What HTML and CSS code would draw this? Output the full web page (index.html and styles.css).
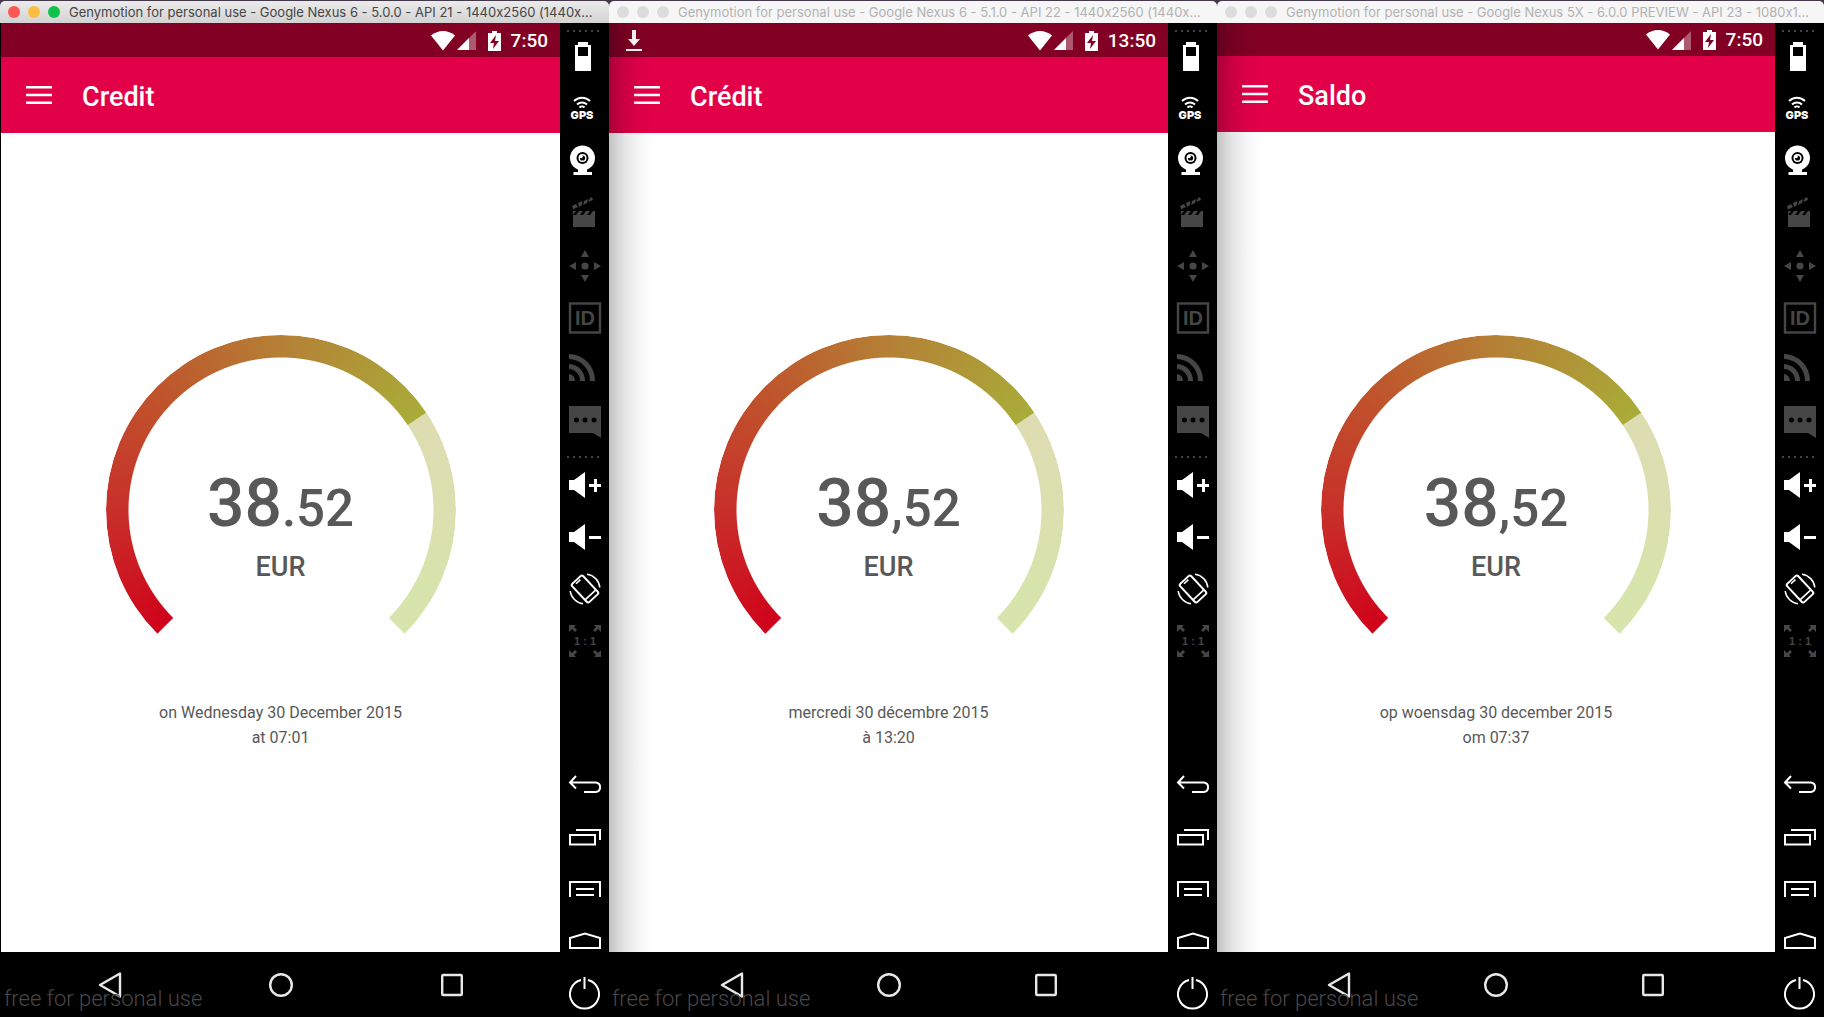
FILE: index.html
```html
<!DOCTYPE html>
<html lang="en">
<head>
<meta charset="utf-8">
<meta name="viewport" content="width=device-width, initial-scale=1">
<title>Genymotion for personal use</title>
<link rel="stylesheet" href="styles.css">
</head>
<body>
<svg class="sprite" aria-hidden="true">
  <symbol id="t-battery" viewBox="0 0 49 52"><path fill="currentColor" fill-rule="evenodd" d="M18 9h10v3h3v26H15V12h3zM18 14v9h10v-9z"/></symbol>
  <symbol id="t-gps" viewBox="0 0 49 52"><g fill="none" stroke="currentColor" stroke-width="2"><path d="M14 16a11.500 11.500 0 0 1 16 0M17 19.500a7.500 7.500 0 0 1 10 0M19.500 22.500a3.600 3.600 0 0 1 5 0"/></g></symbol>
  <symbol id="t-cam" viewBox="0 0 49 52"><circle cx="22.500" cy="21" r="12.500" fill="currentColor"/><path fill="currentColor" d="M18 31h9v4h5v3H13.500v-3H18z"/><circle cx="22.500" cy="21" r="6" fill="#000"/><circle cx="22.500" cy="21" r="4" fill="currentColor"/><circle cx="22.500" cy="21" r="2.600" fill="#000"/><circle cx="21" cy="19.500" r="1.800" fill="currentColor"/></symbol>
  <symbol id="t-clap" viewBox="0 0 49 52"><path fill="currentColor" d="M13 26h22v12H13zM13 22h3l-3 4zM19 22h4l-3 4h-4zM26 22h4l-3 4h-4zM33 22h2v4h-5zM12 17l4-2 2 3-5 2.500zM18 14l4-2 0 4-3 2zM24 12l4-2-1 4-4 2zM30 9l2-1 1 3-5 2z"/></symbol>
  <symbol id="t-move" viewBox="0 0 49 52"><path fill="currentColor" d="M25 9l4 7h-8zM25 41l4-7h-8zM9 25l7-4v8zM41 25l-7-4v8z"/><circle cx="25" cy="25" r="3.600" fill="currentColor"/></symbol>
  <symbol id="t-id" viewBox="0 0 49 52"><rect x="10" y="10.500" width="30" height="29" fill="none" stroke="currentColor" stroke-width="2.400"/></symbol>
  <symbol id="t-rss" viewBox="0 0 49 52"><path fill="currentColor" d="M9 9a26.500 26.500 0 0 1 26 27h-5A21.500 21.500 0 0 0 9 14zM9 19a16.500 16.500 0 0 1 16 17h-5A11.500 11.500 0 0 0 9 24zM9 29a7 7 0 0 1 6 7H9z"/></symbol>
  <symbol id="t-chat" viewBox="0 0 49 52"><path fill="currentColor" d="M9 9h32v32l-8-5H9z"/><g fill="#000"><circle cx="16.500" cy="23" r="2.500"/><circle cx="25" cy="23" r="2.500"/><circle cx="34" cy="23" r="2.500"/></g></symbol>
  <symbol id="t-volup" viewBox="0 0 49 52"><path fill="currentColor" d="M9 21h5l11-8v26l-11-8H9zM29 25h5v-5h3v5h4v3h-4v5h-3v-5h-5z"/></symbol>
  <symbol id="t-voldown" viewBox="0 0 49 52"><path fill="currentColor" d="M9 21h5l11-8v26l-11-8H9zM29 25h12v3H29z"/></symbol>
  <symbol id="t-rotate" viewBox="0 0 49 52"><g fill="none" stroke="currentColor"><g transform="rotate(-43 25 26)"><rect x="17.500" y="13.500" width="15" height="25" rx="2" stroke-width="2"/><path stroke-width="1.600" d="M18 34h14M22 16h6"/></g><path stroke-width="1.500" d="M27 11.200a14.800 14.800 0 0 1 12.800 13.300M10.200 28a14.800 14.800 0 0 0 12.800 12.800"/></g></symbol>
  <symbol id="t-full" viewBox="0 0 49 52"><path fill="currentColor" d="M9 10h7l-2 2 3 3-2 2-3-3-3 3zM41 10h-7l2 2-3 3 2 2 3-3 3 3zM9 42h7l-2-2 3-3-2-2-3 3-3-3zM41 42h-7l2-2-3-3 2-2 3 3 3-3z"/></symbol>
  <symbol id="t-back" viewBox="0 0 49 52"><path fill="none" stroke="currentColor" stroke-width="2" d="M16 19l-6 6.500 6 6M10 25.500h26a4.800 4.800 0 0 1 0 9.500H24"/></symbol>
  <symbol id="t-recent" viewBox="0 0 49 52"><path fill="none" stroke="currentColor" stroke-width="2" d="M10 26h25v9.500H10zM16 21h24v10"/></symbol>
  <symbol id="t-menu" viewBox="0 0 49 52"><path fill="none" stroke="currentColor" stroke-width="2" d="M10 36V21h30v15M16 28h18M16 34h18"/></symbol>
  <symbol id="t-home" viewBox="0 0 49 52"><path fill="none" stroke="currentColor" stroke-width="2" d="M10 35V25l15-4.500L40 25v10z"/></symbol>
  <symbol id="t-power" viewBox="0 0 49 52"><path fill="none" stroke="currentColor" stroke-width="2" d="M21 15a14.500 14.500 0 1 0 7 0M24.500 12v12"/></symbol>

  <symbol id="s-wifi" viewBox="0 0 24 20"><path fill="#fff" d="M0 4.500C7-1.500 17-1.500 24 4.500L12 19.500z"/></symbol>
  <symbol id="s-signal" viewBox="0 0 19 19"><path fill="#fff" fill-opacity=".35" d="M19 0v19H0z"/><path fill="#fff" d="M12 7v12H0z"/></symbol>
  <symbol id="s-charge" viewBox="0 0 13 20"><path fill="#fff" fill-rule="evenodd" d="M4 0h5v2h4v18H0V2h4zM8 4l-6 8h4l-1 6 6-8H7z"/></symbol>
  <symbol id="s-download" viewBox="0 0 16 22"><path fill="#fff" d="M6 0h4v9h4l-6 7-6-7h4zM0 19h16v2H0z"/></symbol>
  <symbol id="a-menu" viewBox="0 0 26 18"><path fill="#fff" d="M0 0h26v2.500H0zM0 7.750h26v2.500H0zM0 15.500h26V18H0z"/></symbol>
  <symbol id="n-back" viewBox="0 0 24 26"><path fill="none" stroke="#e8e8e8" stroke-width="2.400" stroke-linejoin="round" d="M22 1.500v23L2 13z"/></symbol>
  <symbol id="n-home" viewBox="0 0 24 26"><circle cx="12" cy="13" r="10.800" fill="none" stroke="#e8e8e8" stroke-width="2.400"/></symbol>
  <symbol id="n-recent" viewBox="0 0 24 26"><rect x="2.200" y="3" width="19.600" height="20" rx="1" fill="none" stroke="#e8e8e8" stroke-width="2.400"/></symbol>
</svg>

<main class="desktop">
  <section class="window window-active" lang="en">
    <header class="titlebar">
      <button class="light light-red" aria-label="Close"></button><button class="light light-yellow" aria-label="Minimise"></button><button class="light light-green" aria-label="Zoom"></button>
      <span class="titlebar-text">Genymotion for personal use - Google Nexus 6 - 5.0.0 - API 21 - 1440x2560 (1440x...</span>
    </header>
    <div class="device">
      <div class="screen">
        <div class="statusbar">
          <svg class="wifi"><use href="#s-wifi"/></svg><svg class="signal"><use href="#s-signal"/></svg><svg class="charge"><use href="#s-charge"/></svg>
          <time class="clock">7:50</time>
        </div>
        <header class="appbar">
          <button class="hamburger" aria-label="Menu"><svg><use href="#a-menu"/></svg></button>
          <h1 class="appbar-title">Credit</h1>
        </header>
        <div class="content">
          <div class="gauge">
            <div class="amount">38<span class="cents">.52</span></div>
            <div class="currency">EUR</div>
          </div>
          <p class="date">on Wednesday 30 December 2015<br>at 07:01</p>
        </div>
        <nav class="navbar navbar-wide">
          <button aria-label="Back"><svg><use href="#n-back"/></svg></button>
          <button aria-label="Home"><svg><use href="#n-home"/></svg></button>
          <button aria-label="Recent"><svg><use href="#n-recent"/></svg></button>
          <span class="watermark">free for personal use</span>
        </nav>
      </div>
      <aside class="tools">
        <div class="dots"></div>
        <button aria-label="Battery"><svg><use href="#t-battery"/></svg></button>
        <button aria-label="GPS"><svg><use href="#t-gps"/><text class="gps" x="22" y="34" text-anchor="middle">GPS</text></svg></button>
        <button aria-label="Camera"><svg><use href="#t-cam"/></svg></button>
        <button disabled aria-label="Screencast"><svg><use href="#t-clap"/></svg></button>
        <button disabled aria-label="Remote control"><svg><use href="#t-move"/></svg></button>
        <button disabled aria-label="Identifiers"><svg><use href="#t-id"/><text class="idt" x="25" y="32" text-anchor="middle">ID</text></svg></button>
        <button disabled aria-label="Network"><svg><use href="#t-rss"/></svg></button>
        <button disabled aria-label="Messages"><svg><use href="#t-chat"/></svg></button>
        <div class="dots"></div>
        <button aria-label="Volume up"><svg><use href="#t-volup"/></svg></button>
        <button aria-label="Volume down"><svg><use href="#t-voldown"/></svg></button>
        <button aria-label="Rotate"><svg><use href="#t-rotate"/></svg></button>
        <button disabled aria-label="Pixel perfect"><svg><use href="#t-full"/><text class="one" x="25" y="30" text-anchor="middle">1 : 1</text></svg></button>
        <div class="spacer"></div>
        <button aria-label="Back"><svg><use href="#t-back"/></svg></button>
        <button aria-label="Recent apps"><svg><use href="#t-recent"/></svg></button>
        <button aria-label="Menu"><svg><use href="#t-menu"/></svg></button>
        <button aria-label="Home"><svg><use href="#t-home"/></svg></button>
        <button aria-label="Power"><svg><use href="#t-power"/></svg></button>
      </aside>
    </div>
  </section>

  <section class="window" lang="fr">
    <header class="titlebar">
      <button class="light" aria-label="Close"></button><button class="light" aria-label="Minimise"></button><button class="light" aria-label="Zoom"></button>
      <span class="titlebar-text">Genymotion for personal use - Google Nexus 6 - 5.1.0 - API 22 - 1440x2560 (1440x...</span>
    </header>
    <div class="device">
      <div class="screen">
        <div class="statusbar">
          <svg class="download"><use href="#s-download"/></svg>
          <svg class="wifi"><use href="#s-wifi"/></svg><svg class="signal"><use href="#s-signal"/></svg><svg class="charge"><use href="#s-charge"/></svg>
          <time class="clock">13:50</time>
        </div>
        <header class="appbar">
          <button class="hamburger" aria-label="Menu"><svg><use href="#a-menu"/></svg></button>
          <h1 class="appbar-title">Crédit</h1>
        </header>
        <div class="content">
          <div class="gauge">
            <div class="amount">38<span class="cents">,52</span></div>
            <div class="currency">EUR</div>
          </div>
          <p class="date">mercredi 30 décembre 2015<br>à 13:20</p>
        </div>
        <nav class="navbar">
          <button aria-label="Back"><svg><use href="#n-back"/></svg></button>
          <button aria-label="Home"><svg><use href="#n-home"/></svg></button>
          <button aria-label="Recent"><svg><use href="#n-recent"/></svg></button>
          <span class="watermark">free for personal use</span>
        </nav>
      </div>
      <aside class="tools">
        <div class="dots"></div>
        <button aria-label="Battery"><svg><use href="#t-battery"/></svg></button>
        <button aria-label="GPS"><svg><use href="#t-gps"/><text class="gps" x="22" y="34" text-anchor="middle">GPS</text></svg></button>
        <button aria-label="Camera"><svg><use href="#t-cam"/></svg></button>
        <button disabled aria-label="Screencast"><svg><use href="#t-clap"/></svg></button>
        <button disabled aria-label="Remote control"><svg><use href="#t-move"/></svg></button>
        <button disabled aria-label="Identifiers"><svg><use href="#t-id"/><text class="idt" x="25" y="32" text-anchor="middle">ID</text></svg></button>
        <button disabled aria-label="Network"><svg><use href="#t-rss"/></svg></button>
        <button disabled aria-label="Messages"><svg><use href="#t-chat"/></svg></button>
        <div class="dots"></div>
        <button aria-label="Volume up"><svg><use href="#t-volup"/></svg></button>
        <button aria-label="Volume down"><svg><use href="#t-voldown"/></svg></button>
        <button aria-label="Rotate"><svg><use href="#t-rotate"/></svg></button>
        <button disabled aria-label="Pixel perfect"><svg><use href="#t-full"/><text class="one" x="25" y="30" text-anchor="middle">1 : 1</text></svg></button>
        <div class="spacer"></div>
        <button aria-label="Back"><svg><use href="#t-back"/></svg></button>
        <button aria-label="Recent apps"><svg><use href="#t-recent"/></svg></button>
        <button aria-label="Menu"><svg><use href="#t-menu"/></svg></button>
        <button aria-label="Home"><svg><use href="#t-home"/></svg></button>
        <button aria-label="Power"><svg><use href="#t-power"/></svg></button>
      </aside>
    </div>
  </section>

  <section class="window window-5x" lang="nl">
    <header class="titlebar">
      <button class="light" aria-label="Close"></button><button class="light" aria-label="Minimise"></button><button class="light" aria-label="Zoom"></button>
      <span class="titlebar-text">Genymotion for personal use - Google Nexus 5X - 6.0.0 PREVIEW - API 23 - 1080x1...</span>
    </header>
    <div class="device">
      <div class="screen">
        <div class="statusbar">
          <svg class="wifi"><use href="#s-wifi"/></svg><svg class="signal"><use href="#s-signal"/></svg><svg class="charge"><use href="#s-charge"/></svg>
          <time class="clock">7:50</time>
        </div>
        <header class="appbar">
          <button class="hamburger" aria-label="Menu"><svg><use href="#a-menu"/></svg></button>
          <h1 class="appbar-title">Saldo</h1>
        </header>
        <div class="content">
          <div class="gauge">
            <div class="amount">38<span class="cents">,52</span></div>
            <div class="currency">EUR</div>
          </div>
          <p class="date">op woensdag 30 december 2015<br>om 07:37</p>
        </div>
        <nav class="navbar">
          <button aria-label="Back"><svg><use href="#n-back"/></svg></button>
          <button aria-label="Home"><svg><use href="#n-home"/></svg></button>
          <button aria-label="Recent"><svg><use href="#n-recent"/></svg></button>
          <span class="watermark">free for personal use</span>
        </nav>
      </div>
      <aside class="tools">
        <div class="dots"></div>
        <button aria-label="Battery"><svg><use href="#t-battery"/></svg></button>
        <button aria-label="GPS"><svg><use href="#t-gps"/><text class="gps" x="22" y="34" text-anchor="middle">GPS</text></svg></button>
        <button aria-label="Camera"><svg><use href="#t-cam"/></svg></button>
        <button disabled aria-label="Screencast"><svg><use href="#t-clap"/></svg></button>
        <button disabled aria-label="Remote control"><svg><use href="#t-move"/></svg></button>
        <button disabled aria-label="Identifiers"><svg><use href="#t-id"/><text class="idt" x="25" y="32" text-anchor="middle">ID</text></svg></button>
        <button disabled aria-label="Network"><svg><use href="#t-rss"/></svg></button>
        <button disabled aria-label="Messages"><svg><use href="#t-chat"/></svg></button>
        <div class="dots"></div>
        <button aria-label="Volume up"><svg><use href="#t-volup"/></svg></button>
        <button aria-label="Volume down"><svg><use href="#t-voldown"/></svg></button>
        <button aria-label="Rotate"><svg><use href="#t-rotate"/></svg></button>
        <button disabled aria-label="Pixel perfect"><svg><use href="#t-full"/><text class="one" x="25" y="30" text-anchor="middle">1 : 1</text></svg></button>
        <div class="spacer"></div>
        <button aria-label="Back"><svg><use href="#t-back"/></svg></button>
        <button aria-label="Recent apps"><svg><use href="#t-recent"/></svg></button>
        <button aria-label="Menu"><svg><use href="#t-menu"/></svg></button>
        <button aria-label="Home"><svg><use href="#t-home"/></svg></button>
        <button aria-label="Power"><svg><use href="#t-power"/></svg></button>
      </aside>
    </div>
  </section>
</main>
</body>
</html>
```
FILE: styles.css
```css
* {
  box-sizing: border-box;
}

body {
  margin: 0;
  background: #43394a;
  font-family: Roboto, "Liberation Sans", sans-serif;
  color: #585858;
}

button {
  display: block;
  flex: none;
  margin: 0;
  padding: 0;
  border: 0;
  background: none;
  color: #fff;
}

svg {
  display: block;
  flex: none;
}

.sprite {
  position: absolute;
  width: 0;
  height: 0;
}

.desktop {
  display: grid;
  grid-template-columns: minmax(0, 609fr) minmax(0, 608fr) minmax(0, 607fr);
  min-height: 100vh;
}

.window {
  position: relative;
  display: flex;
  flex-direction: column;
}

/* Shadow that the window in front casts on this one */
.window + .window .screen::before {
  content: "";
  position: absolute;
  inset: 0 auto 0 0;
  width: 44px;
  background: linear-gradient(to right, rgba(0, 0, 0, .24), rgba(0, 0, 0, .1) 35%, rgba(0, 0, 0, .03) 70%, transparent);
  pointer-events: none;
}

/* Title bar */
.titlebar {
  display: flex;
  align-items: center;
  gap: 8px;
  height: 22px;
  margin-top: 1px;
  padding: 0 8px;
  border-radius: 5px 5px 0 0;
  background: #f6f6f6;
  color: #b2b2b2;
}

.window-active .titlebar {
  background: linear-gradient(#ebebeb, #d3d3d3);
  color: #454545;
}

.light {
  width: 12px;
  height: 12px;
  border-radius: 50%;
  background: #dcdcdc;
}

.light-red { background: #fc5753; }
.light-yellow { background: #fdbc40; }
.light-green { background: #0fc34a; }

.titlebar-text {
  margin-left: 1px;
  font-family: Inter, "Liberation Sans", sans-serif;
  font-feature-settings: "calt" 0;
  font-size: 13px;
  line-height: 22px;
  white-space: nowrap;
}

/* Device */
.device {
  display: flex;
  flex: 1;
  background: #000;
}

.window-active .device {
  border-left: 1px solid #000;
}

.screen {
  position: relative;
  display: flex;
  flex: 1;
  flex-direction: column;
  min-width: 0;
  background: #fff;
}

.statusbar {
  display: flex;
  align-items: center;
  justify-content: flex-end;
  height: 34px;
  padding: 1px 12px 0 17px;
  background: #820024;
  color: #fff;
}

.window-5x .statusbar {
  height: 33px;
}

.wifi { width: 24px; height: 20px; margin-right: 2px; }
.signal { width: 19px; height: 19px; margin-right: 12px; }
.charge { width: 13px; height: 20px; margin-right: 10px; }
.download { width: 16px; height: 22px; margin-right: auto; }

.clock {
  font-size: 19px;
  line-height: 24px;
  font-weight: 500;
}

.appbar {
  display: flex;
  align-items: center;
  gap: 30px;
  height: 76px;
  padding: 0 25px;
  background: #e20049;
}

.hamburger svg {
  width: 26px;
  height: 18px;
}

.appbar-title {
  margin: 0;
  padding-top: 3px;
  color: #fff;
  font-size: 27px;
  line-height: 32px;
  font-weight: 500;
}

.content {
  display: flex;
  flex: 1;
  flex-direction: column;
  align-items: center;
  justify-content: center;
}

/* Gauge: 270 degrees, filled from the lower left */
.gauge {
  position: relative;
  width: 350px;
  height: 350px;
  padding-top: 135px;
  text-align: center;
  font-weight: 500;
}

.gauge::before {
  content: "";
  position: absolute;
  inset: 0;
  border-radius: 50%;
  background: conic-gradient(from 180deg, rgba(208, 2, 27, 0) 44.8deg, #d0021b 45.1deg, #c8302a 90deg, #bf552c 135deg, #b58036 180deg, #a9ac38 236deg, #dedcb2 236.3deg, #d6e5ab 314.9deg, rgba(214, 229, 171, 0) 315.2deg);
  -webkit-mask: radial-gradient(circle, transparent 152px, #000 153px);
  mask: radial-gradient(circle, transparent 152px, #000 153px);
}

.amount {
  font-size: 66px;
  line-height: 68px;
}

.cents {
  font-size: 51px;
}

.currency {
  margin-top: 8px;
  font-size: 27px;
  line-height: 32px;
}

.date {
  margin: 15px 0 0;
  font-size: 16px;
  line-height: 25px;
  text-align: center;
}

/* Android navigation */
.navbar {
  position: relative;
  display: flex;
  align-items: center;
  justify-content: center;
  gap: 133px;
  height: 65px;
  background: #000;
}

.navbar-wide {
  gap: 147px;
}

.navbar svg {
  width: 24px;
  height: 26px;
}

.watermark {
  position: absolute;
  left: 3px;
  bottom: 4px;
  color: #484848;
  font-size: 22px;
  line-height: 28px;
  font-weight: 300;
}

/* Emulator tools */
.tools {
  display: flex;
  flex: none;
  flex-direction: column;
  width: 49px;
  background: #000;
}

.tools svg {
  width: 49px;
  height: 52px;
}

.tools button:disabled {
  color: #464646;
}

.dots {
  height: 10px;
  margin: 0 9px 0 7px;
  background: repeating-linear-gradient(to right, #444 0 2px, transparent 2px 6px) 0 7px / 100% 2px no-repeat;
}

.spacer {
  flex: 1;
}

.gps,
.idt,
.one {
  fill: currentColor;
  font-family: "Liberation Sans", Arial, sans-serif;
  font-weight: 700;
}

.gps {
  font-family: Inter, "Liberation Sans", sans-serif;
  font-size: 11px;
  font-weight: 900;
}

.idt { font-size: 20px; }
.one { font-size: 11px; }
```
